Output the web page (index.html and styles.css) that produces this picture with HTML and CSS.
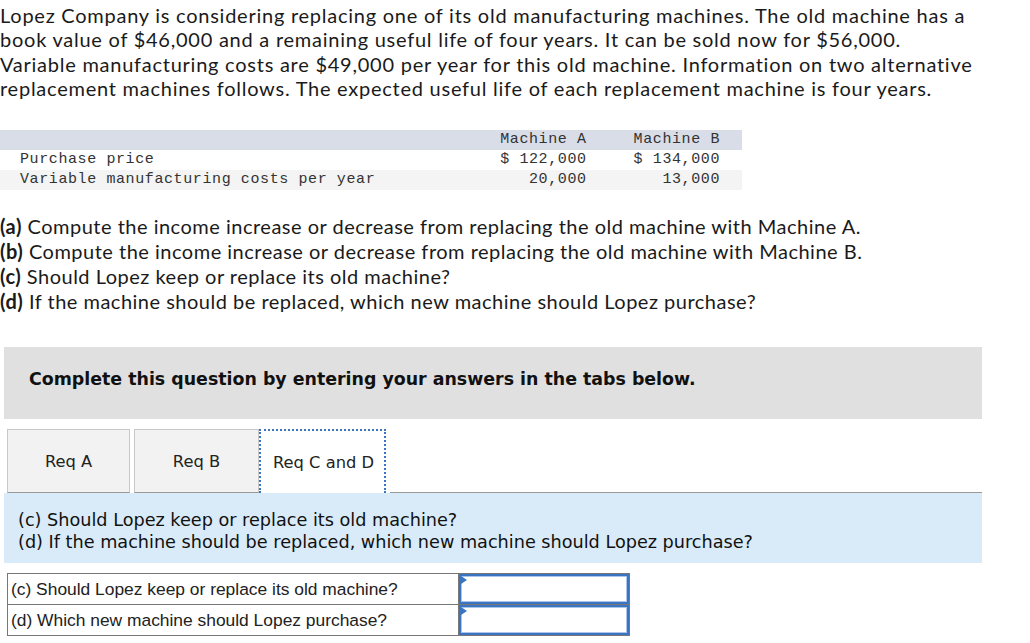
FILE: index.html
```html
<!DOCTYPE html>
<html>
<head>
<meta charset="utf-8">
<link rel="stylesheet" href="styles.css">
</head>
<body>
<div class="page">
  <p class="intro">Lopez Company is considering replacing one of its old manufacturing machines. The old machine has a<br>book value of $46,000 and a remaining useful life of four years. It can be sold now for $56,000.<br>Variable manufacturing costs are $49,000 per year for this old machine. Information on two alternative<br>replacement machines follows. The expected useful life of each replacement machine is four years.</p>

  <table class="data">
    <tr class="head"><td class="lbl"></td><td class="num">Machine A</td><td class="num">Machine B</td></tr>
    <tr><td class="lbl">Purchase price</td><td class="num">$ 122,000</td><td class="num">$ 134,000</td></tr>
    <tr class="alt"><td class="lbl">Variable manufacturing costs per year</td><td class="num">20,000</td><td class="num">13,000</td></tr>
  </table>

  <div class="reqs">
    <div><b>(a)</b> Compute the income increase or decrease from replacing the old machine with Machine A.</div>
    <div><b>(b)</b> Compute the income increase or decrease from replacing the old machine with Machine B.</div>
    <div><b>(c)</b> Should Lopez keep or replace its old machine?</div>
    <div><b>(d)</b> If the machine should be replaced, which new machine should Lopez purchase?</div>
  </div>

  <div class="banner">Complete this question by entering your answers in the tabs below.</div>

  <div class="tabs">
    <div class="tab">Req A</div>
    <div class="tab">Req B</div>
    <div class="tab active">Req C and D</div>
    <div class="tabline"></div>
  </div>

  <div class="panel">
    <div>(c) Should Lopez keep or replace its old machine?</div>
    <div>(d) If the machine should be replaced, which new machine should Lopez purchase?</div>
  </div>

  <table class="answers">
    <tr><td class="q">(c) Should Lopez keep or replace its old machine?</td><td class="a"><div class="inp"></div></td></tr>
    <tr><td class="q">(d) Which new machine should Lopez purchase?</td><td class="a"><div class="inp"></div></td></tr>
  </table>
</div>
</body>
</html>
```

FILE: styles.css
```css
html, body { margin: 0; padding: 0; background: #fff; }
.page { color: #222; }
.intro {
  margin: 0;
  padding-top: 3px;
  font-family: Lato, "Open Sans", sans-serif;
  font-size: 20px;
  letter-spacing: 0.75px;
  line-height: 24.3px;
  white-space: nowrap;
  color: #1a1a1a;
}
.data {
  margin-top: 30px;
  border-collapse: collapse;
  font-family: "Liberation Mono", monospace;
  font-size: 15px;
  letter-spacing: 0.6px;
  color: #333;
  width: 742px;
}
.data td { padding: 0; height: 20px; line-height: 20px; white-space: pre; }
.data .head td { background: #d9dde8; }
.data .alt td { background: #f4f4f4; }
.data .lbl { padding-left: 20px; width: 340px; }
.data .num { text-align: right; }
.data td:nth-child(2) { width: 223px; padding-right: 8px; }
.data td:nth-child(3) { width: 129px; padding-right: 22px; }
.reqs {
  margin-top: 24px;
  font-family: Lato, "Open Sans", sans-serif;
  font-size: 20px;
  letter-spacing: 0.5px;
  line-height: 25px;
  white-space: nowrap;
  color: #1a1a1a;
}
.banner {
  box-sizing: border-box;
  margin: 33px 48px 0 4px;
  background: #e0e0e0;
  height: 72px;
  display: flex;
  align-items: center;
  padding: 0 0 9px 25px;
  font-family: "DejaVu Sans", sans-serif;
  font-weight: bold;
  font-size: 17.4px;
  color: #111;
}
.tabs {
  display: flex;
  align-items: flex-end;
  margin: 10px 48px 0 7px;
  height: 64px;
}
.tab {
  box-sizing: border-box;
  width: 123px;
  height: 64px;
  background: #f2f2f2;
  border: 1px solid #c8c8c8;
  border-bottom: 1px solid #999;
  margin-right: 4px;
  display: flex;
  align-items: center;
  justify-content: center;
  font-family: "DejaVu Sans", sans-serif;
  font-size: 16.3px;
  color: #222;
}
.tab:nth-child(2) { width: 125px; margin-right: 0; }
.tab.active {
  width: 127px;
  background: #fff;
  border: 2px dotted #3b74c0;
  border-bottom: none;
  justify-content: flex-start;
  padding-left: 12px;
}
.tabline { flex: 1; border-bottom: 1px solid #999; }
.panel {
  margin: 0 48px 0 4px;
  background: #d9ebf8;
  height: 70px;
  box-sizing: border-box;
  padding: 16px 0 0 14px;
  font-family: "DejaVu Sans", sans-serif;
  font-size: 17.65px;
  line-height: 22px;
  color: #111;
}
.answers {
  margin: 10px 0 0 7px;
  border-collapse: collapse;
  font-family: "Liberation Sans", Arial, sans-serif;
  font-size: 17.4px;
  color: #222;
}
.answers td { border: 1px solid #777; height: 30px; padding: 0; }
.answers .q { width: 447px; padding-left: 3px; }
.answers .a { width: 170px; padding: 0; }
.inp {
  position: relative;
  box-sizing: border-box;
  height: 30px;
  border: 2px solid #3b74c0;
  box-shadow: inset 0 0 0 1px #a9c6ea;
  background: #fff;
}
.inp::before {
  content: "";
  position: absolute;
  left: 0; top: 0;
  border-left: 6px solid #3b74c0;
  border-top: 4px solid transparent;
  border-bottom: 4px solid transparent;
}
```
